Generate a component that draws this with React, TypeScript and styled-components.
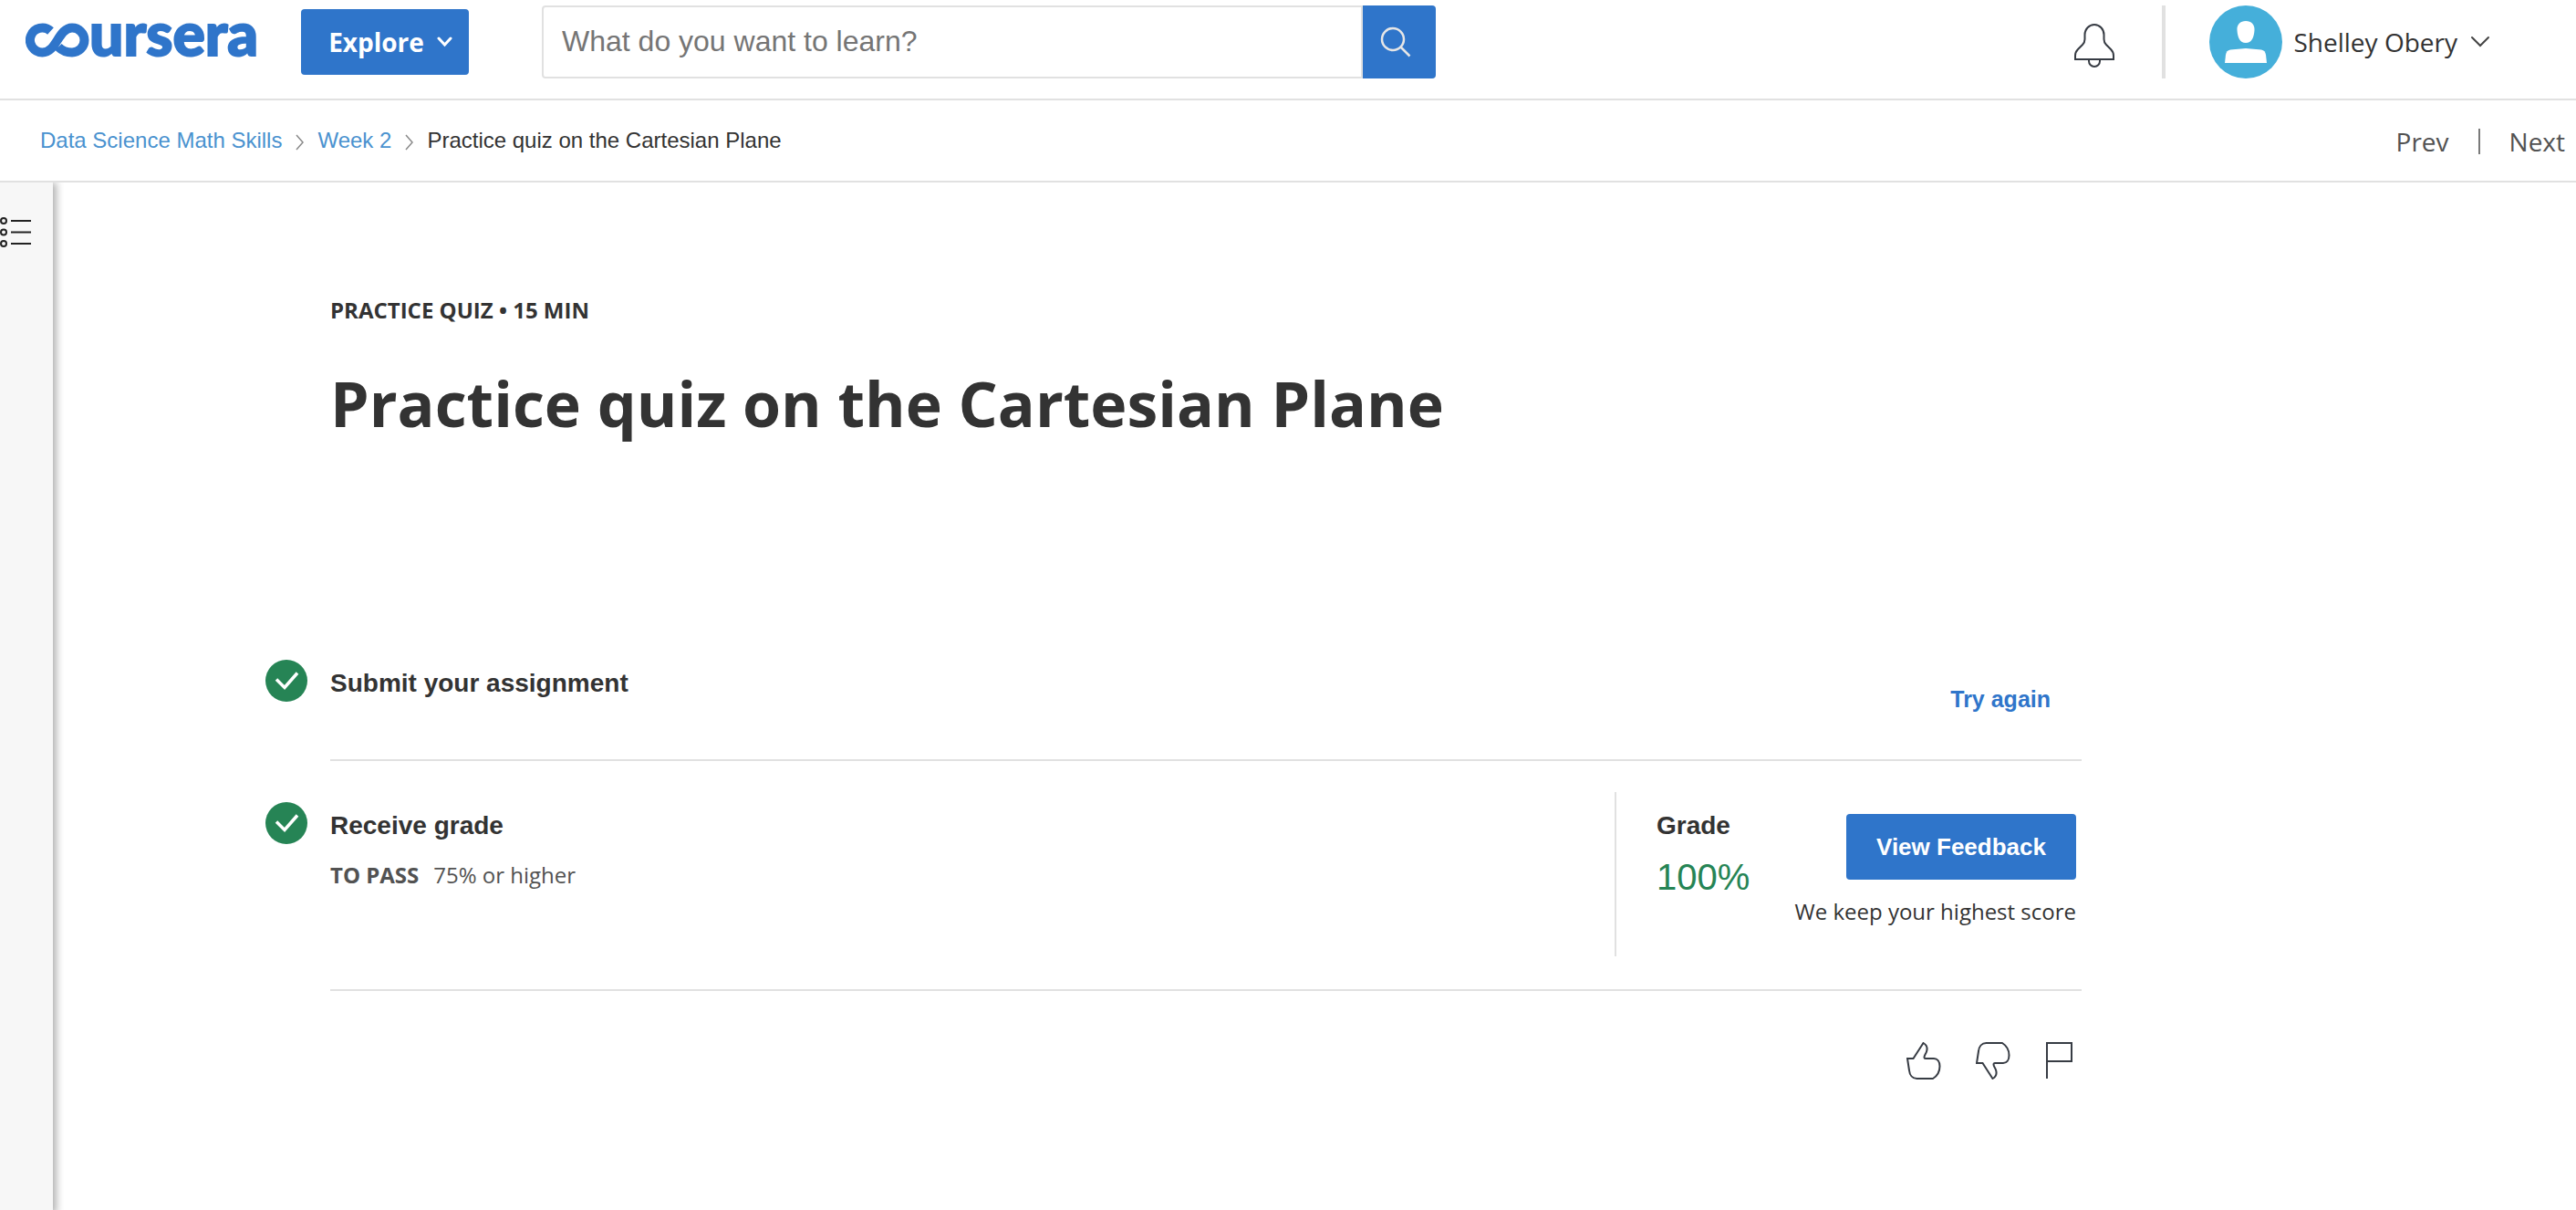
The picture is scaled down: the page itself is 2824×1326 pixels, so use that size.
import React from 'react';
import styled, { createGlobalStyle } from 'styled-components';

const colors = {
  blue: '#2f75ca',
  link: '#4a92cf',
  green: '#268455',
  ink: '#333333',
  muted: '#525252',
  line: '#e1e1e1',
  icon: '#373c44',
};

const sans = `'Open Sans', 'Noto Sans', sans-serif`;
const helvetica = `'Liberation Sans', Arial, sans-serif`;

const GlobalStyle = createGlobalStyle`
  *, *::before, *::after { box-sizing: border-box; }
  body { margin: 0; background: #fff; color: ${colors.ink}; font-family: ${sans}; }
  h1, h2, p, ol { margin: 0; padding: 0; }
  button, input { font: inherit; color: inherit; }
  button { border: 0; padding: 0; background: none; cursor: pointer; }
  a { color: inherit; text-decoration: none; }
  svg { display: block; flex: none; }
`;

const Page = styled.div`
  min-height: 100vh;
  display: flex;
  flex-direction: column;
`;

const Header = styled.header`
  display: flex;
  align-items: center;
  padding: 6px 94px 22px 28px;
  border-bottom: 2px solid ${colors.line};
`;

const Logo = styled.a`
  display: flex;
  align-items: center;
  width: 254px;
  height: 80px;
  color: ${colors.blue};
  font: 900 66px/60px Lato, ${sans};
  padding-bottom: 4px;
`;

const LogoWord = styled.span`
  padding-bottom: 16px;
  -webkit-text-stroke: 2px currentColor;
`;

const Solid = styled.button`
  display: flex;
  align-items: center;
  justify-content: center;
  height: 72px;
  border-radius: 4px;
  background: ${colors.blue};
  color: #fff;
  font-weight: 700;
`;

const ExploreButton = styled(Solid)`
  gap: 14px;
  width: 184px;
  margin-left: 48px;
  font-size: 28px;
  line-height: 40px;
  padding-left: 12px;
`;

const Search = styled.form`
  display: flex;
  width: 980px;
  height: 80px;
  margin-left: 80px;
`;

const SearchInput = styled.input`
  flex: 1;
  min-width: 0;
  border: 2px solid ${colors.line};
  border-radius: 4px 0 0 4px;
  padding: 0 20px 2px;
  font-family: ${helvetica};
  font-size: 32px;
  outline: none;
  &::placeholder { color: #757575; opacity: 1; }
`;

const SearchButton = styled.button`
  display: grid;
  place-items: center;
  width: 80px;
  padding-right: 8px;
  border-radius: 0 4px 4px 0;
  background: ${colors.blue};
`;

const Account = styled.div`
  display: flex;
  align-items: center;
  height: 80px;
  margin-left: auto;
`;

const BellButton = styled.button`
  padding: 8px 52px 0 0;
`;

const UserMenu = styled.button`
  display: flex;
  align-items: center;
  height: 80px;
  padding-left: 48px;
  border-left: 4px solid ${colors.line};
  font-size: 28px;
  line-height: 40px;
`;

const UserName = styled.span`
  margin: 0 14px 0 12px;
`;

const SubHeader = styled.div`
  display: flex;
  align-items: center;
  justify-content: space-between;
  height: 90px;
  padding: 0 12px 0 44px;
  border-bottom: 2px solid ${colors.line};
`;

const Breadcrumbs = styled.ol`
  display: flex;
  align-items: center;
  list-style: none;
  font-family: ${helvetica};
  font-size: 24px;
  line-height: 32px;
  li { display: flex; align-items: center; }
  svg { margin: 4px 15px 0; }
  a { color: ${colors.link}; }
`;

const Pager = styled.nav`
  display: flex;
  align-items: center;
  padding-top: 2px;
  color: ${colors.muted};
  font-size: 28px;
  line-height: 40px;
`;

const PagerRule = styled.span`
  width: 2px;
  height: 28px;
  margin: 0 32px;
  background: #7a7a7a;
`;

const Body = styled.div`
  flex: 1;
  display: flex;
`;

const Rail = styled.aside`
  width: 58px;
  background: #f7f7f7;
  box-shadow: 2px 2px 8px 2px rgba(0, 0, 0, 0.3);
  clip-path: inset(0 -12px 0 0);
  padding-top: 37px;
`;

const Main = styled.main`
  flex: 1;
  padding: 120px 542px 0 233px;
`;

const Intro = styled.header`
  padding-left: 71px;
`;

const Eyebrow = styled.p`
  font-size: 24px;
  font-weight: 700;
  line-height: 40px;
`;

const Title = styled.h1`
  margin-top: 36px;
  font-size: 68px;
  font-weight: 700;
  line-height: 92px;
`;

const Steps = styled.div`
  margin-top: 190px;
`;

const Step = styled.section`
  display: flex;
`;

const StepMark = styled.div`
  flex: none;
  width: 71px;
  padding-top: 45px;
`;

const StepBody = styled.div<{ $height: number }>`
  flex: 1;
  display: flex;
  justify-content: space-between;
  min-height: ${(p) => p.$height}px;
  border-bottom: 2px solid ${colors.line};
`;

const StepHeading = styled.h2`
  font-family: ${helvetica};
  font-size: 28px;
  font-weight: 700;
  line-height: 36px;
`;

const StepText = styled.div`
  padding-top: 53px;
`;

const Requirement = styled.p`
  display: flex;
  gap: 16px;
  margin-top: 18px;
  color: ${colors.muted};
  font-size: 24px;
  line-height: 36px;
`;

const RetryButton = styled.button`
  align-self: flex-start;
  margin: 70px 34px 0 0;
  color: ${colors.blue};
  font: 700 25px/36px ${helvetica};
`;

const GradePanel = styled.div`
  display: flex;
  justify-content: space-between;
  width: 512px;
  height: 180px;
  margin-top: 34px;
  padding: 19px 6px 0 44px;
  border-left: 2px solid ${colors.line};
`;

const GradeValue = styled.p`
  margin-top: 16px;
  color: ${colors.green};
  font-family: ${helvetica};
  font-size: 40px;
  line-height: 44px;
`;

const Feedback = styled.div`
  display: flex;
  flex-direction: column;
  align-items: flex-end;
  padding-top: 5px;
  font-size: 24px;
  line-height: 36px;
  white-space: nowrap;
`;

const FeedbackButton = styled(Solid)`
  width: 252px;
  margin-bottom: 17px;
  font: 700 26px/36px ${helvetica};
`;

const Reactions = styled.div`
  display: flex;
  justify-content: flex-end;
  gap: 38px;
  padding: 56px 10px 0 0;
`;

const LogoMark = () => (
  <svg width="70" height="38" viewBox="0 0 70 38" fill="none" stroke="currentColor" strokeWidth="10" aria-hidden="true">
    <path d="M27.500 9A13.500 13.500 0 1 0 18.500 32.500C34 32.500 36 5.500 51 5.500A13.500 13.500 0 1 1 51 32.500Q42 32.500 36 26.500" />
  </svg>
);

const Chevron = ({ w, h, stroke, color }: { w: number; h: number; stroke: number; color: string }) => (
  <svg width={w} height={h} viewBox={`0 0 ${w} ${h}`} fill="none" stroke={color} strokeWidth={stroke} aria-hidden="true">
    <path d={`M2 2L${w / 2} ${h - 3}L${w - 2} 2`} strokeLinecap="round" />
  </svg>
);

const Separator = () => (
  <svg width="9" height="18" viewBox="0 0 9 18" fill="none" stroke="#8a8a8a" strokeWidth="1.500" aria-hidden="true">
    <path d="M1 1l7 8-7 8" />
  </svg>
);

const CheckBadge = () => (
  <svg width="46" height="46" viewBox="0 0 46 46" role="img" aria-label="Completed">
    <circle cx="23" cy="23" r="23" fill={colors.green} />
    <path d="M12 21.500l9 9L35 14.500" fill="none" stroke="#fff" strokeWidth="3.500" />
  </svg>
);

const THUMB = 'M1 18h6.500L18.500 1c3.500 2 5 5 3.500 9.500-1 3-2.500 4-2.500 6 0 1 .500 1.500 1.500 1.500h9c4 0 6.500 3.500 6.500 8.500 0 6-3.500 11-7.500 13.500H11.500c-5 0-8-4-8.500-9z';

const Thumb = ({ down }: { down?: boolean }) => (
  <svg width="38" height="41" viewBox="0 0 38 41" fill="none" stroke={colors.icon} strokeWidth="2" aria-hidden="true">
    <path d={THUMB} transform={down ? 'matrix(1 0 0 -1 0 41)' : undefined} />
  </svg>
);

export default function App() {
  return (
    <Page>
      <GlobalStyle />
      <Header>
        <Logo href="#" aria-label="coursera">
          <LogoMark />
          <LogoWord>ursera</LogoWord>
        </Logo>
        <ExploreButton type="button">
          Explore
          <Chevron w={17} h={12} stroke={3} color="#fff" />
        </ExploreButton>
        <Search onSubmit={(e) => e.preventDefault()}>
          <SearchInput type="text" aria-label="Search" placeholder="What do you want to learn?" />
          <SearchButton type="submit" aria-label="Submit search">
            <svg width="34" height="34" viewBox="0 0 34 34" fill="none" stroke="#e6e6e6" strokeWidth="2.500" aria-hidden="true">
              <circle cx="14" cy="14" r="12" />
              <path d="M22.500 22.500L32.500 32.500" />
            </svg>
          </SearchButton>
        </Search>
        <Account>
          <BellButton type="button" aria-label="Notifications">
            <svg width="44" height="48" viewBox="0 0 44 48" fill="none" stroke={colors.icon} strokeWidth="2" aria-hidden="true">
              <path d="M1 39v-4c0-3 1-5 3-7l5-5c2-2 2.500-3 2.500-6v-5a10.500 11 0 0 1 21 0v5c0 3 .500 4 2.500 6l5 5c2 2 3 4 3 7v4z" />
              <path d="M16 39v2a6 6 0 0 0 12 0v-2" />
            </svg>
          </BellButton>
          <UserMenu type="button">
            <svg width="80" height="80" viewBox="0 0 80 80" aria-hidden="true">
              <circle cx="40" cy="40" r="40" fill="#45afda" />
              <path d="M40 17c6 0 10 4 9.500 10-.500 8-3 14-9.500 14s-9-6-9.500-14C30 21 34 17 40 17z" fill="#fff" />
              <path d="M17 63l1-9c.500-3 2-5 5-5.500L40 47l17 1.500c3 .500 4.500 2.500 5 5.500l1 9z" fill="#fff" />
            </svg>
            <UserName>Shelley Obery</UserName>
            <Chevron w={22} h={14} stroke={2} color="#444" />
          </UserMenu>
        </Account>
      </Header>

      <SubHeader>
        <nav aria-label="Breadcrumb">
          <Breadcrumbs>
            <li><a href="#">Data Science Math Skills</a><Separator /></li>
            <li><a href="#">Week 2</a><Separator /></li>
            <li aria-current="page">Practice quiz on the Cartesian Plane</li>
          </Breadcrumbs>
        </nav>
        <Pager aria-label="Items">
          <a href="#">Prev</a>
          <PagerRule />
          <a href="#">Next</a>
        </Pager>
      </SubHeader>

      <Body>
        <Rail>
          <button type="button" aria-label="Course outline">
            <svg width="34" height="36" viewBox="0 0 34 36" fill="none" stroke="#222" strokeWidth="2" aria-hidden="true">
              {[5, 17.5, 30].map((y) => (
                <g key={y}>
                  <circle cx="4" cy={y} r="3" />
                  <path d={`M12 ${y}h22`} />
                </g>
              ))}
            </svg>
          </button>
        </Rail>
        <Main>
          <Intro>
            <Eyebrow>PRACTICE QUIZ • 15 MIN</Eyebrow>
            <Title>Practice quiz on the Cartesian Plane</Title>
          </Intro>
          <Steps>
            <Step>
              <StepMark><CheckBadge /></StepMark>
              <StepBody $height={156}>
                <StepText><StepHeading>Submit your assignment</StepHeading></StepText>
                <RetryButton type="button">Try again</RetryButton>
              </StepBody>
            </Step>
            <Step>
              <StepMark><CheckBadge /></StepMark>
              <StepBody $height={252}>
                <StepText>
                  <StepHeading>Receive grade</StepHeading>
                  <Requirement><strong>TO PASS</strong><span>75% or higher</span></Requirement>
                </StepText>
                <GradePanel>
                  <div>
                    <StepHeading>Grade</StepHeading>
                    <GradeValue>100%</GradeValue>
                  </div>
                  <Feedback>
                    <FeedbackButton type="button">View Feedback</FeedbackButton>
                    <p>We keep your highest score</p>
                  </Feedback>
                </GradePanel>
              </StepBody>
            </Step>
          </Steps>
          <Reactions>
            <button type="button" aria-label="Like"><Thumb /></button>
            <button type="button" aria-label="Dislike"><Thumb down /></button>
            <button type="button" aria-label="Report an issue">
              <svg width="30" height="41" viewBox="0 0 30 41" fill="none" stroke={colors.icon} strokeWidth="2" aria-hidden="true">
                <path d="M2 40V1h27v20H2" />
              </svg>
            </button>
          </Reactions>
        </Main>
      </Body>
    </Page>
  );
}
